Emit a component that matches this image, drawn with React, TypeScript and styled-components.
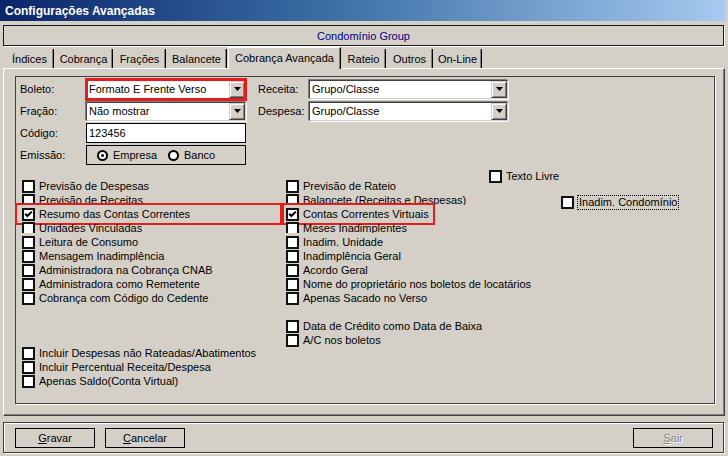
import React from 'react';
import styled, { createGlobalStyle, css } from 'styled-components';

const Global = createGlobalStyle`
  html, body { margin: 0; padding: 0; background: #d4d0c8; }
  body { font-family: "Liberation Sans", Arial, sans-serif; font-size: 11px; color: #000; }
  * { box-sizing: border-box; }
`;

const Window = styled.div`
  width: 728px;
  height: 456px;
  background: #d4d0c8;
  display: flex;
  flex-direction: column;
  overflow: hidden;
`;

const TitleBar = styled.div`
  height: 21px;
  flex: 0 0 21px;
  display: flex;
  align-items: center;
  padding-left: 5px;
  margin-right: 3px;
  background: linear-gradient(to right, #0a246a 0%, #3a6ea5 45%, #a6caf0 100%);
  color: #fff;
  font-weight: bold;
  font-size: 12px;
`;

const Body = styled.div`
  flex: 1;
  display: flex;
  flex-direction: column;
  padding: 4px 3px 3px 3px;
`;

const Header = styled.div`
  height: 21px;
  flex: 0 0 21px;
  border: 1px solid #1a1a1a;
  margin-right: 1px;
  box-shadow: 1px 1px 0 #fff;
  display: flex;
  align-items: center;
  justify-content: center;
  color: #000080;
`;

const TabStrip = styled.div`
  margin-top: 2px;
  height: 20px;
  flex: 0 0 20px;
  display: flex;
  align-items: flex-end;
  padding-left: 3px;
  position: relative;
  z-index: 1;
`;

const Tab = styled.div<{ $active?: boolean; $w: number }>`
  width: ${(p) => p.$w}px;
  height: 19px;
  display: flex;
  align-items: center;
  justify-content: center;
  margin-right: 1px;
  border-right: 1px solid #000;
  box-shadow: inset -1px 0 0 #808080;
  white-space: nowrap;
  ${(p) =>
    p.$active &&
    css`
      height: 22px;
      margin-bottom: -1px;
      padding-bottom: 2px;
      border-top: 1px solid #fff;
      border-left: 1px solid #fff;
      background: #d4d0c8;
    `}
`;

const TabPanel = styled.div`
  flex: 0 0 348px;
  height: 348px;
  border-top: 1px solid #fff;
  border-left: 1px solid #fff;
  border-right: 1px solid #404040;
  border-bottom: 1px solid #404040;
  box-shadow: inset -1px -1px 0 #808080;
  padding: 7px 9px 11px 11px;
  display: flex;
`;

const InnerBox = styled.div`
  flex: 1;
  border: 1px solid #404040;
  box-shadow: 1px 1px 0 #fff;
  display: flex;
  flex-direction: column;
`;

const FormArea = styled.div`
  display: flex;
  padding: 2px 0 0 4px;
`;

const FormGrid = styled.div<{ $label: number; $field: number; $ml?: number }>`
  display: grid;
  grid-template-columns: ${(p) => p.$label}px ${(p) => p.$field}px;
  grid-auto-rows: 20px;
  row-gap: 2px;
  margin-left: ${(p) => p.$ml ?? 0}px;
`;

const Label = styled.div`
  display: flex;
  align-items: center;
  white-space: nowrap;
`;

const FieldWrap = styled.div`
  position: relative;
  display: flex;
  align-items: center;
`;

const Combo = styled.div`
  width: 100%;
  height: 19px;
  background: #fff;
  border-top: 1px solid #404040;
  border-left: 1px solid #404040;
  border-right: 1px solid #d4d0c8;
  border-bottom: 1px solid #d4d0c8;
  box-shadow: -1px -1px 0 #808080, 1px 1px 0 #fff;
  display: flex;
  align-items: center;
  padding-left: 2px;
`;

const ComboText = styled.div`
  flex: 1;
  white-space: nowrap;
  overflow: hidden;
`;

const DropButton = styled.div`
  width: 16px;
  height: 17px;
  background: #d4d0c8;
  border-top: 1px solid #d4d0c8;
  border-left: 1px solid #d4d0c8;
  border-right: 1px solid #404040;
  border-bottom: 1px solid #404040;
  box-shadow: inset 1px 1px 0 #fff, inset -1px -1px 0 #808080;
  display: flex;
  align-items: center;
  justify-content: center;
`;

const TextInput = styled.div`
  width: 100%;
  height: 20px;
  background: #fff;
  border: 1px solid #000;
  display: flex;
  align-items: center;
  padding-left: 2px;
`;

const RadioGroup = styled.div`
  width: 100%;
  height: 20px;
  border: 1px solid #000;
  display: flex;
  align-items: center;
  padding-left: 10px;
`;

const RadioItem = styled.div`
  display: flex;
  align-items: center;
  gap: 5px;
  margin-right: 11px;
`;

const RadioCircle = styled.div<{ $on?: boolean }>`
  width: 11px;
  height: 11px;
  border-radius: 50%;
  border: 2px solid #000;
  background: #fff;
  display: flex;
  align-items: center;
  justify-content: center;
  &::after {
    content: '';
    display: ${(p) => (p.$on ? 'block' : 'none')};
    width: 3px;
    height: 3px;
    border-radius: 50%;
    background: #000;
  }
`;

const RedBox = styled.div<{ $t: number; $r: number; $b: number; $l: number; $w: number }>`
  position: absolute;
  top: ${(p) => p.$t}px;
  right: ${(p) => p.$r}px;
  bottom: ${(p) => p.$b}px;
  left: ${(p) => p.$l}px;
  border: ${(p) => p.$w}px solid #e41c1c;
  pointer-events: none;
`;

const CheckArea = styled.div`
  display: flex;
  margin-top: 5px;
  padding-left: 6px;
`;

const CheckCol = styled.div<{ $w?: number; $pt?: number }>`
  display: flex;
  flex-direction: column;
  width: ${(p) => (p.$w ? `${p.$w}px` : 'auto')};
  padding-top: ${(p) => p.$pt ?? 0}px;
`;

const Spacer = styled.div<{ $h: number }>`
  height: ${(p) => p.$h}px;
`;

const CheckRow = styled.div<{ $ml?: number; $mt?: number }>`
  position: relative;
  height: 14px;
  margin-left: ${(p) => p.$ml ?? 0}px;
  margin-top: ${(p) => p.$mt ?? 0}px;
`;

const CheckInner = styled.div<{ $clip?: boolean }>`
  display: flex;
  align-items: flex-start;
  gap: 4px;
  height: ${(p) => (p.$clip ? 11 : 14)}px;
  overflow-x: visible;
  overflow-y: ${(p) => (p.$clip ? 'clip' : 'visible')};
  white-space: nowrap;
`;

const Box = styled.div`
  flex: 0 0 13px;
  width: 13px;
  height: 13px;
  border: 2px solid #111;
  background: #fff;
  display: flex;
  align-items: center;
  justify-content: center;
`;

const CheckText = styled.span<{ $focus?: boolean }>`
  line-height: 13px;
  ${(p) =>
    p.$focus &&
    css`
      outline: 1px dotted #000;
      outline-offset: 0;
      padding: 0 1px;
    `}
`;

const ButtonBar = styled.div`
  margin-top: 6px;
  height: 31px;
  flex: 0 0 31px;
  border: 1px solid #404040;
  margin-right: 1px;
  box-shadow: inset 1px 1px 0 #fff, 1px 1px 0 #fff;
  display: flex;
  align-items: center;
  padding: 0 10px 0 11px;
  gap: 10px;
`;

const Button = styled.div<{ $disabled?: boolean; $push?: boolean }>`
  width: 80px;
  height: 20px;
  border: 1px solid #000;
  display: flex;
  align-items: center;
  justify-content: center;
  margin-left: ${(p) => (p.$push ? 'auto' : '0')};
  color: ${(p) => (p.$disabled ? '#808080' : '#000')};
  text-shadow: ${(p) => (p.$disabled ? '1px 1px 0 #fff' : 'none')};
  u { text-decoration: underline; }
`;

const Arrow = () => (
  <svg width="7" height="4" viewBox="0 0 7 4">
    <polygon points="0,0 7,0 3.5,4" fill="#000" />
  </svg>
);

const Tick = () => (
  <svg width="9" height="9" viewBox="0 0 9 9">
    <polyline points="1.2,3.8 3.4,6 7.8,1.6" fill="none" stroke="#000" strokeWidth="2" />
  </svg>
);

type Item = { label: string; checked?: boolean; clip?: boolean };

const Check: React.FC<{ item: Item; children?: React.ReactNode; focus?: boolean; ml?: number; mt?: number }> = ({
  item,
  children,
  focus,
  ml,
  mt,
}) => (
  <CheckRow $ml={ml} $mt={mt}>
    <CheckInner $clip={item.clip}>
      <Box>{item.checked && <Tick />}</Box>
      <CheckText $focus={focus}>{item.label}</CheckText>
    </CheckInner>
    {children}
  </CheckRow>
);

const col1: Item[] = [
  { label: 'Previsão de Despesas' },
  { label: 'Previsão de Receitas', clip: true },
  { label: 'Resumo das Contas Correntes', checked: true },
  { label: 'Unidades Vinculadas', clip: true },
  { label: 'Leitura de Consumo' },
  { label: 'Mensagem Inadimplência' },
  { label: 'Administradora na Cobrança CNAB' },
  { label: 'Administradora como Remetente' },
  { label: 'Cobrança com Código do Cedente' },
];

const col1b: Item[] = [
  { label: 'Incluir Despesas não Rateadas/Abatimentos' },
  { label: 'Incluir Percentual Receita/Despesa' },
  { label: 'Apenas Saldo(Conta Virtual)' },
];

const col2: Item[] = [
  { label: 'Previsão de Rateio' },
  { label: 'Balancete (Receitas e Despesas)', clip: true },
  { label: 'Contas Correntes Virtuais', checked: true },
  { label: 'Meses Inadimplentes', clip: true },
  { label: 'Inadim. Unidade' },
  { label: 'Inadimplência Geral' },
  { label: 'Acordo Geral' },
  { label: 'Nome do proprietário nos boletos de locatários' },
  { label: 'Apenas Sacado no Verso' },
];

const col2b: Item[] = [{ label: 'Data de Crédito como Data de Baixa' }, { label: 'A/C nos boletos' }];

const tabs: { label: string; w: number }[] = [
  { label: 'Índices', w: 48 },
  { label: 'Cobrança', w: 58 },
  { label: 'Frações', w: 52 },
  { label: 'Balancete', w: 60 },
  { label: 'Cobrança Avançada', w: 113 },
  { label: 'Rateio', w: 44 },
  { label: 'Outros', w: 46 },
  { label: 'On-Line', w: 48 },
];

const ComboBox: React.FC<{ value: string }> = ({ value }) => (
  <Combo>
    <ComboText>{value}</ComboText>
    <DropButton>
      <Arrow />
    </DropButton>
  </Combo>
);

export default function App() {
  return (
    <>
      <Global />
      <Window>
        <TitleBar>Configurações Avançadas</TitleBar>
        <Body>
          <Header>Condomínio Group</Header>
          <TabStrip>
            {tabs.map((t) => (
              <Tab key={t.label} $w={t.w} $active={t.label === 'Cobrança Avançada'}>
                {t.label}
              </Tab>
            ))}
          </TabStrip>
          <TabPanel>
            <InnerBox>
              <FormArea>
                <FormGrid $label={66} $field={160}>
                  <Label>Boleto:</Label>
                  <FieldWrap>
                    <ComboBox value="Formato E Frente Verso" />
                    <RedBox $t={-1} $r={-1} $b={-2} $l={-1} $w={3} />
                  </FieldWrap>
                  <Label>Fração:</Label>
                  <FieldWrap>
                    <ComboBox value="Não mostrar" />
                  </FieldWrap>
                  <Label>Código:</Label>
                  <FieldWrap>
                    <TextInput>123456</TextInput>
                  </FieldWrap>
                  <Label>Emissão:</Label>
                  <FieldWrap>
                    <RadioGroup>
                      <RadioItem>
                        <RadioCircle $on />
                        <span>Empresa</span>
                      </RadioItem>
                      <RadioItem>
                        <RadioCircle />
                        <span>Banco</span>
                      </RadioItem>
                    </RadioGroup>
                  </FieldWrap>
                </FormGrid>
                <FormGrid $label={51} $field={199} $ml={12}>
                  <Label>Receita:</Label>
                  <FieldWrap>
                    <ComboBox value="Grupo/Classe" />
                  </FieldWrap>
                  <Label>Despesa:</Label>
                  <FieldWrap>
                    <ComboBox value="Grupo/Classe" />
                  </FieldWrap>
                </FormGrid>
              </FormArea>
              <CheckArea>
                <CheckCol $w={264} $pt={10}>
                  {col1.map((it) => (
                    <Check key={it.label} item={it}>
                      {it.checked && <RedBox $t={-5} $r={2} $b={-3} $l={-7} $w={2} />}
                    </Check>
                  ))}
                  <Spacer $h={41} />
                  {col1b.map((it) => (
                    <Check key={it.label} item={it} />
                  ))}
                </CheckCol>
                <CheckCol $w={203} $pt={10}>
                  {col2.map((it) => (
                    <Check key={it.label} item={it}>
                      {it.checked && <RedBox $t={-5} $r={54} $b={-3} $l={-6} $w={2} />}
                    </Check>
                  ))}
                  <Spacer $h={14} />
                  {col2b.map((it) => (
                    <Check key={it.label} item={it} />
                  ))}
                </CheckCol>
                <CheckCol>
                  <Check item={{ label: 'Texto Livre' }} />
                  <Check item={{ label: 'Inadim. Condomínio' }} focus ml={72} mt={12} />
                </CheckCol>
              </CheckArea>
            </InnerBox>
          </TabPanel>
          <ButtonBar>
            <Button>
              <span>
                <u>G</u>ravar
              </span>
            </Button>
            <Button>
              <span>
                <u>C</u>ancelar
              </span>
            </Button>
            <Button $disabled $push>
              <span>
                <u>S</u>air
              </span>
            </Button>
          </ButtonBar>
        </Body>
      </Window>
    </>
  );
}
